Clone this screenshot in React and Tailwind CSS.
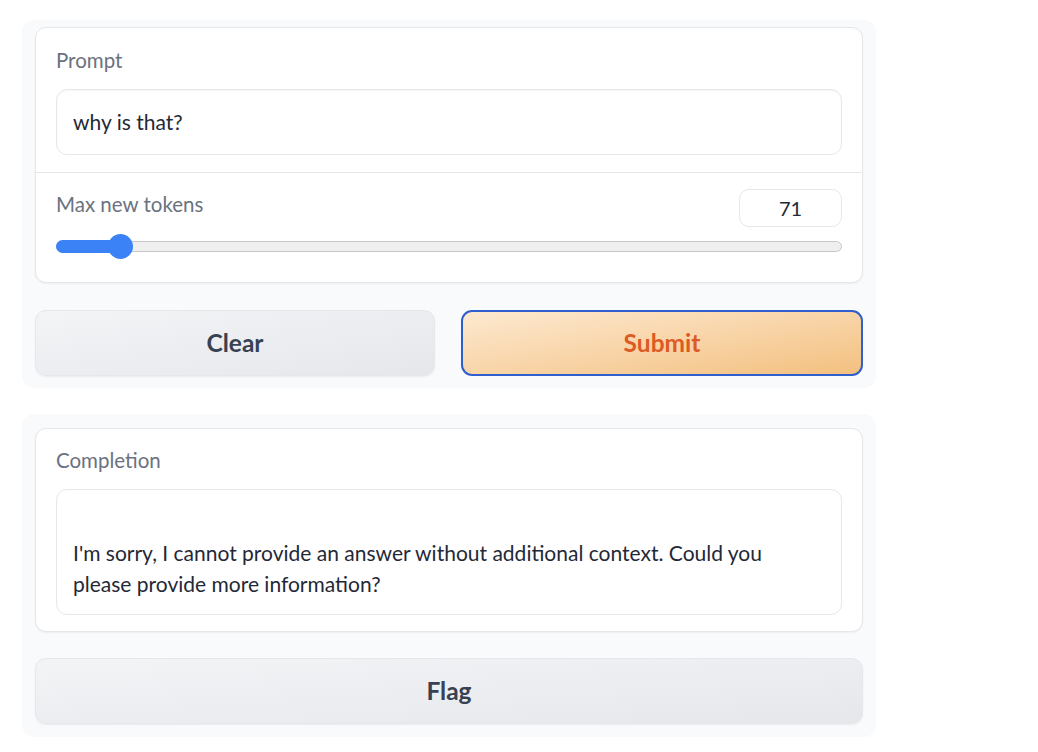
export default function App() {
  const font = { fontFamily: 'Lato, "Noto Sans", sans-serif' };
  return (
    <div className="min-h-[752px] bg-white" style={font}>
      <div className="w-[854px] ml-[22px] pt-[20px] flex flex-col gap-[26px]">
        {/* input panel */}
        <div className="bg-[#f9fafb] rounded-[12px] px-[13px] pt-[7px] pb-[12px] flex flex-col gap-[27px]">
          <div className="bg-white border border-[#e5e7eb] rounded-[11px] shadow-[0_1px_2px_rgba(0,0,0,0.05)]">
            <div className="px-[20px] pt-[18px] pb-[17px] border-b border-[#e5e7eb]">
              <div className="text-[20.5px] leading-[28px] text-[#6b7280]">Prompt</div>
              <div className="mt-[15px] h-[66px] border border-[#e5e7eb] rounded-[11px] px-[16px] flex items-center text-[21px] text-[#1f2937] shadow-[inset_0_1px_2px_rgba(0,0,0,0.04)]">
                why is that?
              </div>
            </div>
            <div className="px-[20px] pt-[16px] pb-[30px]">
              <div className="flex items-center justify-between">
                <div className="text-[20.5px] leading-[28px] text-[#6b7280] -mt-[8px]">Max new tokens</div>
                <div className="w-[103px] h-[38px] border border-[#e5e7eb] rounded-[10px] flex items-center justify-center text-[20px] text-[#1f2937]">
                  71
                </div>
              </div>
              <div className="relative mt-[13px] h-[12px]">
                <div className="absolute inset-x-0 top-[1px] h-[11px] rounded-full bg-[#efefef] border border-[#c8c8c8]"></div>
                <div className="absolute left-0 top-0 h-[13px] w-[66px] rounded-full bg-[#3b82f6]"></div>
                <div className="absolute left-[52px] top-[-6px] w-[25px] h-[25px] rounded-full bg-[#3b82f6]"></div>
              </div>
            </div>
          </div>
          <div className="flex gap-[26px]">
            <button className="flex-1 h-[66px] rounded-[11px] border border-[#e5e7eb] bg-gradient-to-br from-[#f3f4f6] to-[#e5e7eb] text-[24.5px] font-bold text-[#374151] shadow-[0_1px_2px_rgba(0,0,0,0.06)]">
              Clear
            </button>
            <button className="flex-1 h-[66px] rounded-[11px] border-[2px] border-[#2f5fcc] bg-gradient-to-br from-[#fde9d0] to-[#f3c07f] text-[24.5px] font-bold text-[#dd5a24]">
              Submit
            </button>
          </div>
        </div>

        {/* output panel */}
        <div className="bg-[#f9fafb] rounded-[12px] px-[13px] pt-[14px] pb-[13px] flex flex-col gap-[26px]">
          <div className="bg-white border border-[#e5e7eb] rounded-[11px] px-[20px] pt-[17px] pb-[16px] shadow-[0_1px_2px_rgba(0,0,0,0.05)]">
            <div className="text-[20.5px] leading-[28px] text-[#6b7280]">Completion</div>
            <div className="mt-[15px] border border-[#e5e7eb] rounded-[11px] px-[16px] pt-[16px] pb-[15px] text-[21px] leading-[31px] text-[#1f2937]">
              <div>&nbsp;</div>
              <div>I'm sorry, I cannot provide an answer without additional context. Could you please provide more information?</div>
            </div>
          </div>
          <button className="h-[66px] rounded-[11px] border border-[#e5e7eb] bg-gradient-to-br from-[#f3f4f6] to-[#e5e7eb] text-[24.5px] font-bold text-[#374151] shadow-[0_1px_2px_rgba(0,0,0,0.06)]">
            Flag
          </button>
        </div>
      </div>
    </div>
  );
}
